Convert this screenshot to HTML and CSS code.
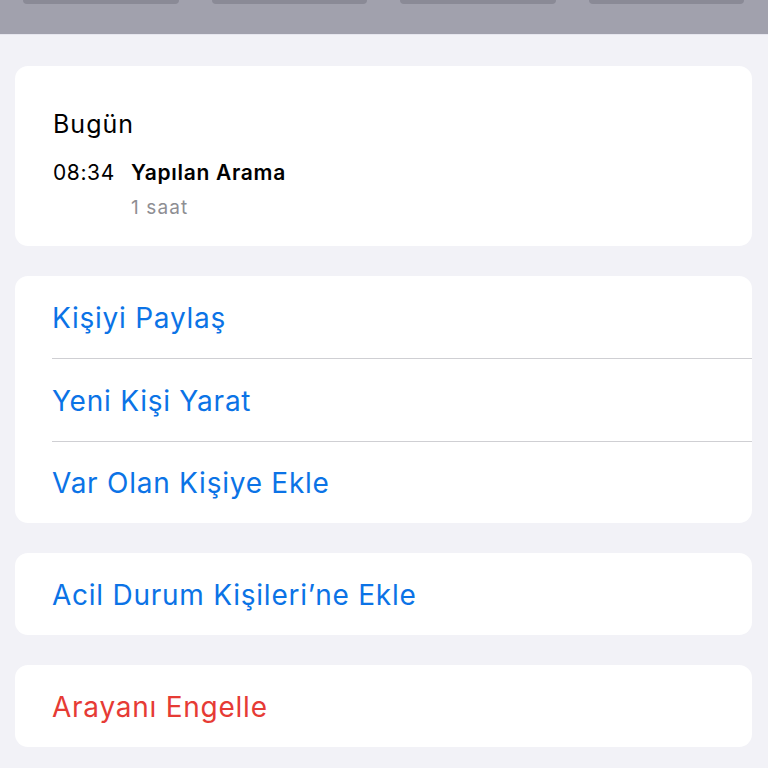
FILE: index.html
```html
<!DOCTYPE html>
<html lang="tr">
<head>
<meta charset="utf-8">
<title>Arama Ayrıntıları</title>
<link rel="stylesheet" href="styles.css">
</head>
<body>
<div class="topbar">
  <div class="tab"></div>
  <div class="tab"></div>
  <div class="tab"></div>
  <div class="tab"></div>
</div>
<main class="content">
  <section class="card history">
    <div class="day">Bugün</div>
    <div class="call">
      <span class="time">08:34</span>
      <div class="call-info">
        <div class="call-type">Yapılan Arama</div>
        <div class="duration">1 saat</div>
      </div>
    </div>
  </section>
  <section class="card">
    <div class="row blue">Kişiyi Paylaş</div>
    <div class="row blue">Yeni Kişi Yarat</div>
    <div class="row blue">Var Olan Kişiye Ekle</div>
  </section>
  <section class="card">
    <div class="row blue">Acil Durum Kişileri’ne Ekle</div>
  </section>
  <section class="card">
    <div class="row red">Arayanı Engelle</div>
  </section>
</main>
</body>
</html>
```
FILE: styles.css
```css
* { box-sizing: border-box; }
html, body { margin: 0; padding: 0; }
body {
  width: 768px;
  height: 768px;
  overflow: hidden;
  background: #f2f2f7;
  font-family: Inter, "Liberation Sans", Arial, sans-serif;
  color: #000;
}
.topbar {
  height: 35px;
  background: #a1a1ad;
  border-bottom: 1px solid #e6e6ee;
  display: flex;
  gap: 33px;
  padding: 0 24px 0 23px;
}
.tab {
  flex: 1;
  height: 4px;
  background: #8a8a96;
  border-radius: 0 0 10px 10px;
}
.content {
  padding: 31px 16px 0 15px;
  display: flex;
  flex-direction: column;
  gap: 30px;
}
.card {
  background: #fff;
  border-radius: 13px;
  overflow: hidden;
}
.history {
  padding: 43px 38px 27px;
  height: 180px;
}
.day {
  font-size: 25px;
  line-height: 30px;
  letter-spacing: 1px;
}
.call {
  display: flex;
  margin-top: 21px;
}
.time {
  font-size: 21px;
  line-height: 26px;
  width: 78px;
  letter-spacing: 0.6px;
}
.call-type {
  font-size: 21px;
  line-height: 26px;
  font-weight: 600;
  letter-spacing: 0.7px;
}
.duration {
  margin-top: 10px;
  font-size: 19px;
  line-height: 24px;
  letter-spacing: 1.1px;
  color: #8e8e93;
}
.row {
  height: 82px;
  display: flex;
  align-items: center;
  margin-left: 37px;
  font-size: 28px;
  letter-spacing: 0.75px;
  padding-top: 2px;
}
.row + .row {
  height: 82.5px;
  border-top: 1px solid #cfcfd3;
}
.blue { color: #0b73e6; }
.red { color: #e63b35; }
```
